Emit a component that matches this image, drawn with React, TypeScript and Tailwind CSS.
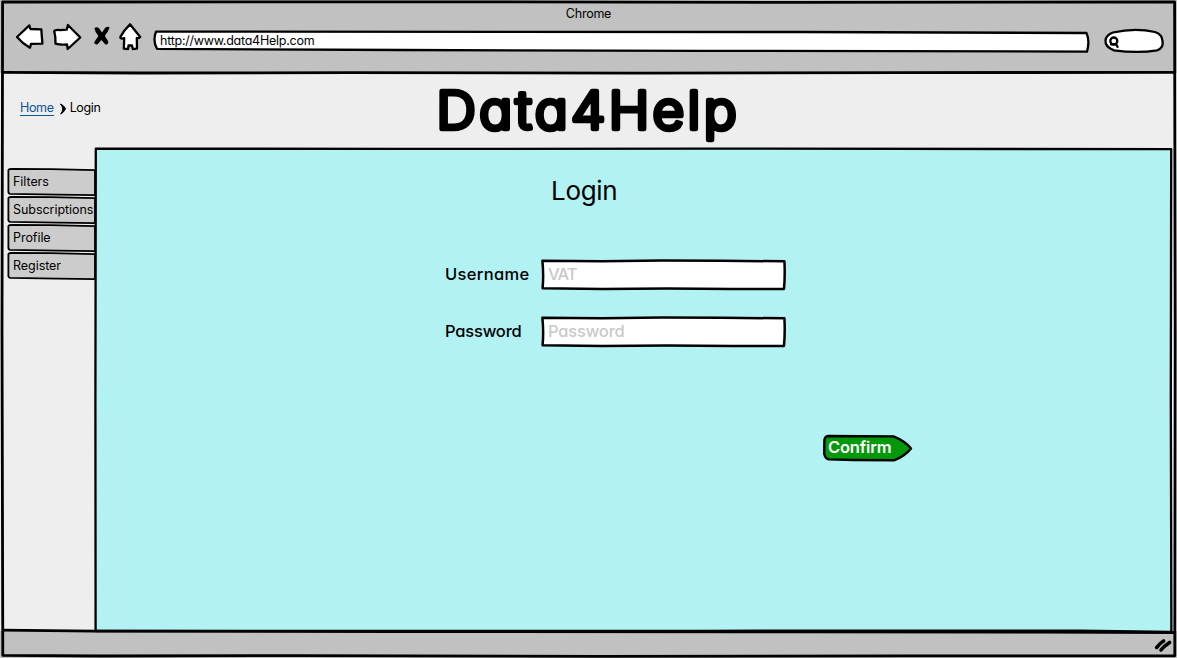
import React from "react";

const NAV = ["Filters", "Subscriptions", "Profile", "Register"];

const ART = "pointer-events-none absolute left-0 top-0 overflow-visible";

function Toolbar() {
  return (
    <header className="relative h-[73px] shrink-0 bg-[#c1c1c1]">
      <svg className={ART} width="1177" height="73" fill="#fff" stroke="#000" strokeWidth="2.3" strokeLinejoin="round" strokeLinecap="round">
        <path d="M17 37 L29.3 25.4 L30.4 29 L41.3 29.4 L42.4 43.7 L31 43.8 L30 47.7 L23 43 Z" />
        <path d="M54.2 31 Q55 29.6 60 30.1 L66.8 29.6 L67.9 25 L80.3 37.5 L67.7 49 L67 44.4 Q60 45 55.5 43.6 L55.3 37 Z" />
        <path d="M130 24.3 L140.2 37 Q139.3 38.7 136.8 38 L137 48.6 L132.8 49 L132 45.5 L128.6 45.3 L128 49 L123.8 48.7 L124.2 38.2 Q120.3 39.3 120.3 37 Q124 30 130 24.3 Z" />
        <path d="M156 31.6 L800 32 L1086.5 33 Q1090 41 1087 51.6 L700 50.8 L400 50 L157 48.8 Q152.5 41 156 31.6 Z" />
        <path d="M1113 32.5 Q1135 27.5 1155 32 Q1162 34 1162.5 41 Q1164 48 1157 50.3 Q1138 53.5 1114 50.3 Q1105 47 1105.5 40.5 Q1106 35 1113 32.5 Z" />
        <circle cx="1113.8" cy="41" r="3.5" />
        <path d="M1111 44.4 L1116 44.2 L1117.6 46.8" fill="none" />
        <path d="M94.4 28.2 Q97 26 99.2 28.4 L102 32.4 L105 28 Q107.6 25.8 109.6 27.4 Q108 32 104.8 35.8 L108.4 41.8 Q108.2 45 105.4 44.4 L101.4 40 L97.6 44.2 Q94.6 45 94 42.6 L98.4 36 Q95 32 94.4 28.2 Z" fill="#000" stroke="none" />
      </svg>
      <div className="relative flex h-[27px] items-center justify-center pt-[2px]">
        <span className="text-[12.5px] leading-none tracking-[-0.25px]">Chrome</span>
      </div>
      <div className="relative flex h-[27px] items-center pl-[160px] pt-[2px]">
        <span className="text-[12.5px] leading-none tracking-[-0.25px]">http://www.data4Help.com</span>
      </div>
    </header>
  );
}

function Tab({ label }: { label: string }) {
  return (
    <a className="relative flex h-[28px] items-center pl-[6px] pt-px">
      <svg className={ART} width="88" height="28" fill="#cccccc" stroke="#000" strokeWidth="1.8" strokeLinejoin="round">
        <path d="M1.4 2 Q1.7 1 4 1 L44 1.2 L88 2.2 L88 27.2 L50 26.6 L3 25.8 Q1 25.5 1.4 22 Z" />
      </svg>
      <span className="relative text-[12.5px] leading-none tracking-[-0.05px]">{label}</span>
    </a>
  );
}

function Field({ label, hint, labelClass, hintClass }: { label: string; hint: string; labelClass: string; hintClass: string }) {
  return (
    <label className="flex h-[31px] items-center text-[16.5px] font-medium leading-none">
      <span className={"w-[97px] pb-[3px] " + labelClass}>{label}</span>
      <span className="relative flex h-[31px] w-[244px] items-center pb-[3px] pl-[6px]">
        <svg className={ART} width="244" height="31" fill="#fff" stroke="#000" strokeWidth="2.5" strokeLinejoin="round">
          <path d="M0.4 0.8 L60 1.2 L120 0.6 L180 0.8 L242.4 1.3 Q243.2 15 242 29 L190 29 L125 28.6 L60 29 L0.6 28.2 Q1.8 15 0.4 0.8 Z" />
        </svg>
        <span className={"relative text-[#c9c9c9] " + hintClass}>{hint}</span>
      </span>
    </label>
  );
}

function Outline() {
  return (
    <svg className={ART} width="1177" height="658" fill="none" stroke="#000" strokeWidth="2.8" strokeLinejoin="round">
      <path d="M2.6 2 L400 1.8 L800 2.4 L1174.6 2 L1175.2 330 L1174.8 655.8 L900 655.8 L600 656.4 L300 655.6 L100 656 L2.8 655.4 L2 330 Z" />
      <path d="M2 72.4 L140 73 L350 72.6 L640 73.2 L900 72.6 L1175 72.4" />
      <path d="M2 630.2 L95 631.2 L400 631.6 L800 631.8 L1040 632 L1175 632.6" />
      <path d="M95.8 148.6 L400 148.9 L700 148.6 L1171.2 149.2 L1170.8 400 L1171.4 631.8 L1080 630.6 L700 630.8 L95.6 631 L95.4 400 Z" strokeWidth="2.3" />
      <path d="M1156.6 647.6 Q1160 643 1163.6 641 M1161 650 Q1164 646 1169.6 642.4" strokeWidth="3.6" strokeLinecap="round" />
    </svg>
  );
}

export default function App() {
  return (
    <div className="relative flex h-[658px] w-[1177px] flex-col overflow-hidden bg-[#eee] text-black [font-family:Inter,sans-serif] [font-feature-settings:'cv11']">
      <Toolbar />
      <div className="flex h-[75px] shrink-0 items-start">
        <nav className="flex w-[437px] items-center pl-[20px] pt-[26px] text-[12.5px] leading-[16px] tracking-[-0.35px]">
          <a className="border-b border-[#0e5299] pt-px leading-[15px] text-[#0e5299]">Home</a>
          <svg className="ml-[5px] mr-[3px] mt-[3px]" width="8" height="12"><path d="M1.4 1 Q5 2.5 6.6 5.6 Q5 9.5 1.6 11 Q3.6 8.5 3.8 6 Q3.4 3 1.4 1 Z" fill="#000" stroke="#000" strokeLinejoin="round" /></svg>
          <span>Login</span>
        </nav>
        <h1>
          <svg width="310" height="75" role="img">
            <text x="-0.5" y="56.4" fontSize="52" fontWeight="300" letterSpacing="3.2" textLength="303.5" lengthAdjust="spacingAndGlyphs" stroke="#000" strokeWidth="4.6" strokeLinejoin="round">Data4Help</text>
          </svg>
        </h1>
      </div>
      <div className="flex h-[483px] shrink-0">
        <aside className="w-[95px] pl-[7px] pt-[20px]">{NAV.map((n) => <Tab key={n} label={n} />)}</aside>
        <main className="w-[1076px] bg-[#b2f2f2]">
          <div className="flex h-[112px] items-start pl-[456px] pt-[30px]">
            <h2 className="text-[26px] leading-none tracking-[-0.3px]">Login</h2>
          </div>
          <div className="flex flex-col gap-[26px] pl-[350px]">
            <Field label="Username" hint="VAT" labelClass="tracking-[0.35px]" hintClass="tracking-[-1px]" />
            <Field label="Password" hint="Password" labelClass="tracking-[-0.2px]" hintClass="tracking-[-0.2px]" />
          </div>
          <button className="relative ml-[728px] mt-[87px] flex h-[27px] w-[90px] items-center pb-[2px] pl-[5px]">
            <svg className={ART} width="90" height="27" fill="#04990b" stroke="#000" strokeWidth="2.4" strokeLinejoin="round">
              <path d="M5 1 L70.5 1.4 Q82 6 88 13.5 Q82 21 71.5 25.2 L30 25 L6 24.4 Q2.5 24 1.2 19 L1.4 5 Q2 1.2 5 1 Z" />
            </svg>
            <span className="relative text-[16.5px] font-semibold leading-none tracking-[-0.2px] text-white">Confirm</span>
          </button>
        </main>
      </div>
      <footer className="flex-1 bg-[#c1c1c1]" />
      <Outline />
    </div>
  );
}
